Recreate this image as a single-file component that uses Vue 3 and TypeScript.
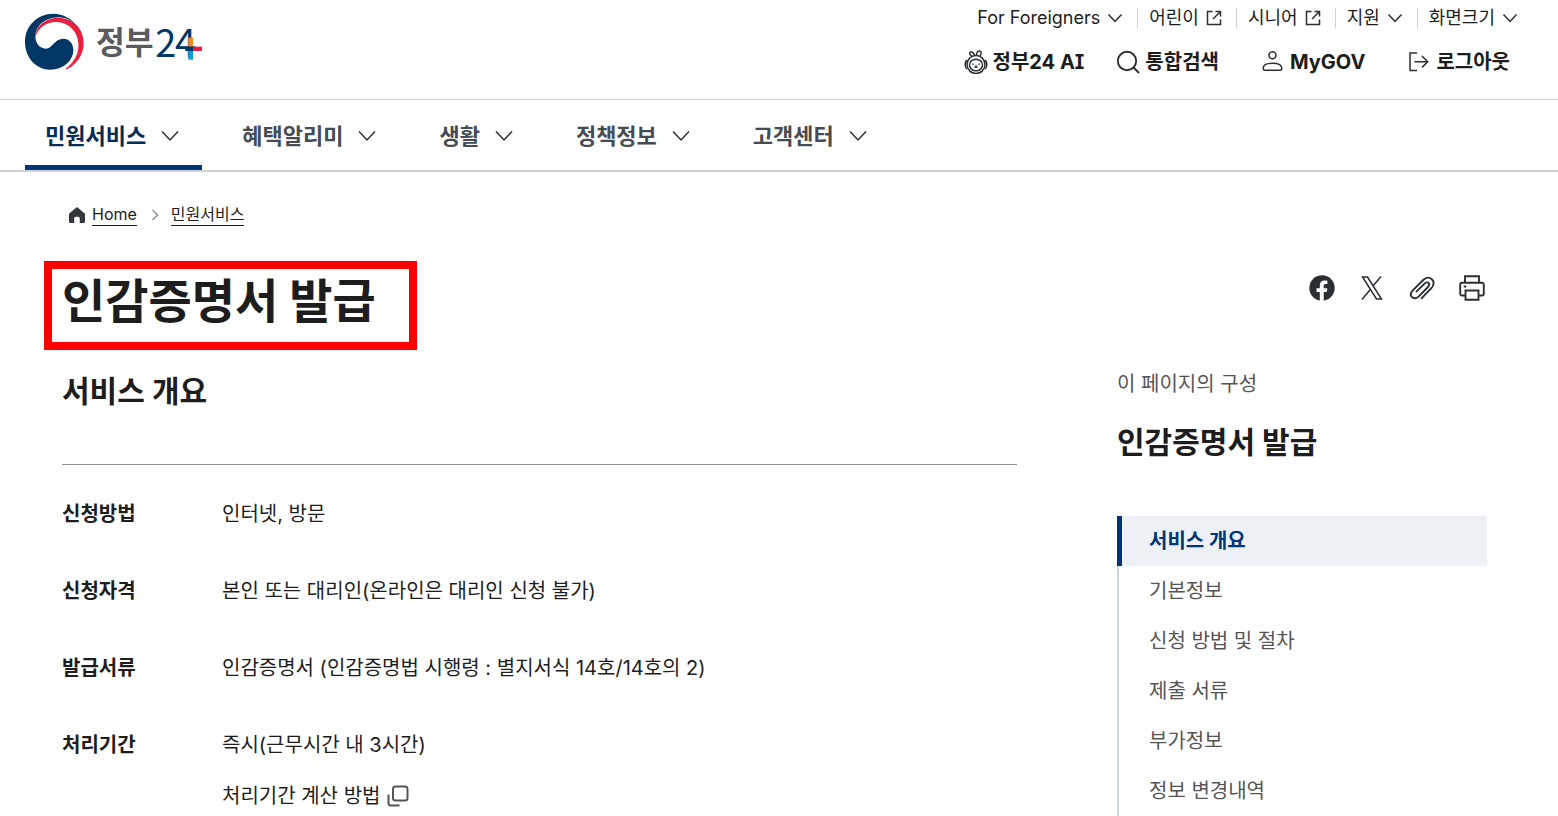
<script setup lang="ts">
interface UtilItem { label: string; icon: 'down' | 'ext' }
interface InfoRow { term: string; lines: string[]; link?: string }

const utils: UtilItem[] = [
  { label: 'For Foreigners', icon: 'down' },
  { label: '어린이', icon: 'ext' },
  { label: '시니어', icon: 'ext' },
  { label: '지원', icon: 'down' },
  { label: '화면크기', icon: 'down' },
]
const menus: string[] = ['민원서비스', '혜택알리미', '생활', '정책정보', '고객센터']
const rows: InfoRow[] = [
  { term: '신청방법', lines: ['인터넷, 방문'] },
  { term: '신청자격', lines: ['본인 또는 대리인(온라인은 대리인 신청 불가)'] },
  { term: '발급서류', lines: ['인감증명서 (인감증명법 시행령 : 별지서식 14호/14호의 2)'] },
  { term: '처리기간', lines: ['즉시(근무시간 내 3시간)'], link: '처리기간 계산 방법' },
]
const sections: string[] = ['서비스 개요', '기본정보', '신청 방법 및 절차', '제출 서류', '부가정보', '정보 변경내역']
</script>

<template>
  <div class="page">
    <header class="header">
      <a class="logo" href="#" aria-label="정부24">
        <svg viewBox="75 40 537 174" width="179" height="58">
          <path fill="#e9203f" d="M106 112C104 84 134 53 176 54C222 56 252 88 251 133C250 166 229 196 200 209L196 208C222 190 238 161 235 130C232 94 206 69 170 67C138 67 115 84 106 112Z" />
          <path fill="#003764" d="M233 84C217 57 189 42 160 42C112 42 75 79 75 126C75 173 108 210 151 210C190 210 220 183 220 151C220 131 207 117 190 117C162 117 158 147 137 147C119 147 106 130 106 110C106 80 133 54 176 53C199 53 219 65 233 84Z" />
          <text class="logo-ko" x="288" y="162">정부</text>
          <text class="logo-num" x="466 525" y="171">24</text>
          <path fill="#f58a1f" d="M565 114h14v27h-14z" />
          <path fill="#003764" d="M556 141h23v13h-23z" />
          <path fill="#e9203f" d="M579 141h27v13h-27z" />
          <path fill="#0a9be0" d="M565 154h14v26h-14z" />
        </svg>
      </a>
      <div class="header-side">
        <ul class="utils">
          <li v-for="u in utils" :key="u.label">
            <button v-if="u.icon === 'down'" type="button">
              {{ u.label }}
              <svg class="line" viewBox="0 0 16 16" width="16" height="16"><path d="M1.500 4.500l6.500 7 6.500-7" /></svg>
            </button>
            <a v-else href="#">
              {{ u.label }}
              <svg class="line" viewBox="0 0 16 16" width="16" height="16"><path d="M6.500 1.500H1.500v13h13v-5M9.500 1.500h5v5M14.500 1.500L7 9" /></svg>
            </a>
          </li>
        </ul>
        <ul class="actions">
          <li>
            <a href="#">
              <svg class="line" viewBox="0 0 24 24" width="24" height="24">
                <circle cx="12" cy="14.500" r="9" />
                <ellipse cx="12" cy="15" rx="6.500" ry="5.800" />
                <path d="M8 6.500C5.500 4.500 5 2.500 6.500 2C8.500 1.500 10 3 10.500 5.500M12.500 5.500C12.500 3 13.500.8 15.500 1C17.800 1.300 17.500 4 15.800 6.300M2.800 10C.8 12 .6 17 2.800 19M21.200 10C23.200 12 23.400 17 21.200 19M10.500 16.500c.8 1 2.200 1 3 0" />
                <path d="M9 13.500v1.200M15 13.500v1.200M11.500 15.500h1" />
              </svg>
              <span class="serif-i">정부24 AI</span>
            </a>
          </li>
          <li>
            <button type="button">
              <svg class="line bold" viewBox="0 0 24 24" width="24" height="24"><circle cx="11" cy="11" r="9.200" /><path d="M17.500 17.500l5.500 5.500" /></svg>
              통합검색
            </button>
          </li>
          <li class="wide">
            <a href="#">
              <svg class="line" viewBox="0 0 24 24" width="24" height="24"><circle cx="11.500" cy="5.300" r="3.500" /><path d="M4 20.300h15c1.200 0 1.800-.8 1.800-2c0-3.300-3.800-5-9.300-5s-9.300 1.700-9.300 5c0 1.200.6 2 1.800 2z" /></svg>
              MyGOV
            </a>
          </li>
          <li class="wide">
            <button type="button">
              <svg class="line" viewBox="0 0 24 24" width="24" height="24"><path d="M10 3H3v17.500h7M7.500 11.700h13M15 6l5.700 5.700-5.700 5.700" /></svg>
              로그아웃
            </button>
          </li>
        </ul>
      </div>
    </header>

    <nav class="gnb" aria-label="주 메뉴">
      <button v-for="(m, i) in menus" :key="m" type="button" :class="{ on: i === 0 }">
        {{ m }}
        <svg class="line" viewBox="0 0 24 24" width="24" height="24"><path d="M4 7.500l8 8.500 8-8.500" /></svg>
      </button>
    </nav>

    <main class="main">
      <nav class="crumbs" aria-label="현재 위치">
        <svg class="home" viewBox="0 0 16 16" width="16" height="16"><path fill="#33363d" d="M8 0L.8 6C.3 6.500 0 7 0 7.600V14.500C0 15.300.6 16 1.500 16H5.200V11.500C5.200 10.400 6 9.800 8 9.800s2.800.6 2.800 1.700V16h3.700c.9 0 1.500-.7 1.500-1.500V7.600C16 7 15.700 6.500 15.200 6z" /></svg>
        <a href="#">Home</a>
        <svg class="sep" viewBox="0 0 8 12" width="8" height="12"><path d="M1.500 1l5 5-5 5" /></svg>
        <a href="#">민원서비스</a>
      </nav>

      <div class="title-row">
        <h1>인감증명서 발급</h1>
        <div class="share">
          <button type="button" aria-label="페이스북">
            <svg viewBox="0 0 26 26" width="26" height="26"><circle cx="13" cy="13" r="12.700" fill="#2b2f33" /><path fill="#fff" d="M10.800 26V17H7.500V13.300h3.300V10.500C10.800 7.200 12.700 5.500 15.700 5.500c1.200 0 2.300.1 2.700.2V8.900H16.600c-1.500 0-1.900.9-1.900 1.900v2.500h3.600L17.700 17h-3v9z" /></svg>
          </button>
          <button type="button" aria-label="X">
            <svg class="line" viewBox="0 0 26 26" width="26" height="26"><path d="M3.500 2h5L22.500 24h-5zM22 1.500L14.200 10.800M11.300 14.500L3 24.500" /></svg>
          </button>
          <button type="button" aria-label="링크 복사">
            <svg class="line bold" viewBox="0 0 26 26" width="26" height="26"><path d="M12 23.800L22.400 13.200C25.200 10.300 25.200 6.400 22.900 4.200C20.600 2 17.200 2.200 14.500 4.800L4 15.100C1.400 17.700 1.200 20.400 3 22.200C4.800 24 7.600 23.500 9.800 21.300L19 12C20.500 10.400 20.500 9 19.500 8C18.500 7 17 7.200 15.500 8.700L7 17.200" /></svg>
          </button>
          <button type="button" aria-label="인쇄">
            <svg class="line bold" viewBox="0 0 26 26" width="26" height="26"><path d="M6 7.500V1.200h14v6.300M6.500 20.500H3c-1 0-1.800-.8-1.800-1.800V9.800C1.200 8.500 2 7.800 3.200 7.800h19.600c1.200 0 2 .7 2 2v8.900c0 1-.8 1.800-1.800 1.800h-3.500M6.500 15.500h13v9.300h-13zM4.800 11.500h2.500" /></svg>
          </button>
        </div>
      </div>

      <div class="columns">
        <section class="overview">
          <h2>서비스 개요</h2>
          <dl>
            <div v-for="r in rows" :key="r.term" class="row">
              <dt>{{ r.term }}</dt>
              <dd>
                <p v-for="l in r.lines" :key="l">{{ l }}</p>
                <a v-if="r.link" href="#">
                  {{ r.link }}
                  <svg viewBox="0 0 22 22" width="22" height="22"><rect x="6" y="1.500" width="14.500" height="14" rx="2.500" /><path d="M1.500 9.500v8.500c0 1.500 1 2.500 2.500 2.500h8.500" /></svg>
                </a>
              </dd>
            </div>
          </dl>
        </section>

        <aside class="toc">
          <p class="toc-label">이 페이지의 구성</p>
          <h2>인감증명서 발급</h2>
          <ul>
            <li v-for="(s, i) in sections" :key="s">
              <a href="#" :class="{ on: i === 0 }">{{ s }}</a>
            </li>
          </ul>
        </aside>
      </div>
    </main>
  </div>
</template>

<style>
body {
  margin: 0;
  background: #fff;
}
</style>

<style scoped>
.page {
  font-family: Inter, "Noto Sans CJK KR", sans-serif;
  font-size: 20px;
  line-height: 30px;
  color: #1d1d1d;
}
.page * {
  box-sizing: border-box;
}
ul, dl, dd, p, h1, h2 {
  margin: 0;
  padding: 0;
}
ul {
  list-style: none;
}
a {
  color: inherit;
  text-decoration: none;
}
button {
  font: inherit;
  color: inherit;
  background: none;
  border: 0;
  padding: 0;
  cursor: pointer;
}
svg {
  display: block;
  flex: none;
}
.line {
  fill: none;
  stroke: #2b2f33;
  stroke-width: 1.5;
}
.line.bold {
  stroke-width: 1.9;
}

.header {
  display: flex;
  justify-content: space-between;
  height: 100px;
  padding: 0 40px 0 25px;
  border-bottom: 1px solid #cdcfd1;
}
.logo {
  padding-top: 13px;
}
.logo-ko {
  font-family: "Noto Sans CJK KR", sans-serif;
  font-size: 94px;
  font-weight: 700;
  fill: #5b5b5d;
}
.logo-num {
  font-family: "Noto Sans CJK KR", sans-serif;
  font-size: 114px;
  font-weight: 400;
  fill: #003764;
}
.header-side {
  display: flex;
  flex-direction: column;
  align-items: flex-end;
}
.utils {
  display: flex;
  padding-top: 8px;
  font-size: 18px;
  line-height: 20px;
}
.utils li + li {
  margin-left: 14px;
  padding-left: 11px;
  border-left: 1px solid #cdd1d5;
}
.utils a,
.utils button {
  display: flex;
  align-items: center;
  gap: 7px;
  height: 20px;
}
.actions {
  display: flex;
  gap: 32px;
  padding: 19px 8px 0 0;
  font-weight: 700;
}
.actions .wide {
  margin-left: 10px;
}
.actions a,
.actions button {
  display: flex;
  align-items: center;
  gap: 5px;
}
.serif-i {
  font-feature-settings: "cv08";
}

.gnb {
  display: flex;
  gap: 20px;
  padding: 0 25px;
  border-bottom: 2px solid #cdd1d5;
}
.gnb button {
  display: flex;
  align-items: center;
  gap: 12px;
  height: 70px;
  padding: 6px 20px 0;
  border-bottom: 5px solid transparent;
  font-size: 22px;
  font-weight: 700;
  color: #464c53;
}
.gnb .on {
  color: #052b57;
  border-color: #003675;
}

.main {
  padding: 30px 71px 0 62px;
}
.crumbs {
  display: flex;
  align-items: center;
  height: 24px;
  padding-left: 7px;
  font-size: 16px;
  line-height: 22px;
}
.crumbs .home {
  margin-top: 2px;
}
.crumbs a {
  margin-left: 7px;
  border-bottom: 1px solid #1d1d1d;
}
.crumbs .sep {
  margin: 2px 5px 0 14px;
  fill: none;
  stroke: #8a949e;
  stroke-width: 1.5;
}

.title-row {
  display: flex;
  justify-content: space-between;
  align-items: flex-start;
  margin-top: 35px;
}
h1 {
  margin-left: -18px;
  padding: 1px 33px 10px 10px;
  border: 8px solid #f00;
  font-size: 47px;
  line-height: 62px;
  font-weight: 700;
}
.share {
  display: flex;
  gap: 24px;
  padding: 14px 2px 0 0;
}

.columns {
  display: grid;
  grid-template-columns: minmax(0, 1fr) 370px;
  gap: 100px;
}
h2 {
  font-size: 30px;
  line-height: 40px;
  font-weight: 700;
}
.overview h2 {
  padding: 21px 0 53px;
  border-bottom: 1px solid #8e8e8e;
}
dl {
  padding-top: 34px;
}
.row {
  display: grid;
  grid-template-columns: 160px 1fr;
  padding-bottom: 47px;
}
.row:last-child {
  padding-bottom: 0;
}
dt {
  font-weight: 700;
}
dd a {
  display: flex;
  align-items: center;
  gap: 7px;
  margin-top: 21px;
}
dd svg {
  fill: none;
  stroke: #555;
  stroke-width: 2;
}

.toc {
  padding-top: 19px;
}
.toc-label {
  color: #555;
}
.toc h2 {
  margin: 23px 0 54px;
}
.toc a {
  display: block;
  height: 50px;
  padding: 10px 0 10px 30px;
  border-left: 2px solid #cbd6e4;
  color: #555;
}
.toc .on {
  padding-left: 27px;
  border-left: 5px solid #003675;
  background: #edf0f5;
  color: #003675;
  font-weight: 700;
}
</style>
